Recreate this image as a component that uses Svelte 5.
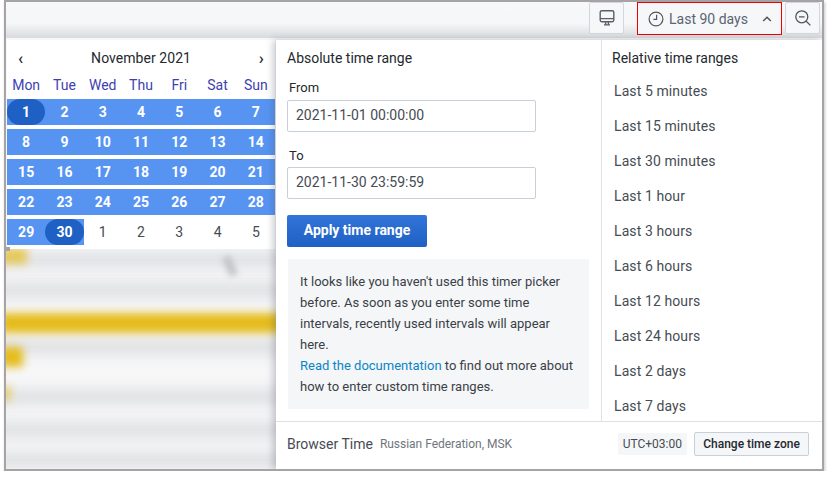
<script>
  const days = ['Mon', 'Tue', 'Wed', 'Thu', 'Fri', 'Sat', 'Sun'];
  const weeks = [];
  for (let w = 0; w < 5; w++) {
    const row = [];
    for (let d = 0; d < 7; d++) {
      const n = w * 7 + d + 1;
      row.push(n <= 30 ? { n, on: true, edge: n === 1 || n === 30 } : { n: n - 30, on: false, edge: false });
    }
    weeks.push(row);
  }
  const ranges = ['Last 5 minutes', 'Last 15 minutes', 'Last 30 minutes', 'Last 1 hour', 'Last 3 hours', 'Last 6 hours', 'Last 12 hours', 'Last 24 hours', 'Last 2 days', 'Last 7 days'];
</script>

<div class="frame">
  <header class="topbar">
    <button class="tool square" aria-label="Monitor">
      <svg width="18" height="18" viewBox="0 0 18 18" fill="none" stroke="#5b6068" stroke-width="1.4"><rect x="2.2" y="1.7" width="13.6" height="11" rx="1.6"/><path d="M2.2 9.6h13.6M6 15.9h6M7.6 12.7v3.2M10.4 12.7v3.2"/></svg>
    </button>
    <button class="tool range">
      <svg width="16" height="16" viewBox="0 0 16 16" fill="none" stroke="#50555c" stroke-width="1.2"><circle cx="8" cy="8" r="6.9"/><path d="M8.6 3.8V8.4H5.4"/></svg>
      <span>Last 90 days</span>
      <svg class="chev" width="10" height="6" viewBox="0 0 10 6" fill="none" stroke="#50555c" stroke-width="1.5"><path d="M1.2 5L5 1.3 8.8 5"/></svg>
    </button>
    <button class="tool square zoom" aria-label="Zoom out">
      <svg width="18" height="18" viewBox="0 0 18 18" fill="none" stroke="#50555c" stroke-width="1.3"><circle cx="7.8" cy="7.8" r="6"/><path d="M5 7.8h5.6M12.2 12.2l4.2 4.2"/></svg>
    </button>
  </header>

  <div class="body">
    <section class="left">
      <div class="blurred" aria-hidden="true">
        <i class="stripe s1"></i><i class="stripe s2"></i><i class="stripe s3"></i><i class="stripe s4"></i><i class="stripe s5"></i><i class="stripe s6"></i>
        <i class="y y1"></i><i class="y y2"></i><i class="y y3"></i><i class="y y4"></i><i class="smudge"></i>
      </div>
      <div class="calendar">
        <div class="cal-head">
          <span class="nav">‹</span>
          <span class="month">November 2021</span>
          <span class="nav">›</span>
        </div>
        <div class="weekdays">
          {#each days as d}<span>{d}</span>{/each}
        </div>
        {#each weeks as row}
          <div class="week">
            {#each row as c}
              <span class="day" class:on={c.on} class:edge={c.edge}>{c.n}</span>
            {/each}
          </div>
        {/each}
      </div>
      <i class="handle"></i>
    </section>

    <section class="panel">
      <div class="columns">
        <div class="absolute">
          <h2>Absolute time range</h2>
          <div class="label">From</div>
          <input value="2021-11-01 00:00:00" />
          <div class="label to">To</div>
          <input value="2021-11-30 23:59:59" />
          <button class="apply">Apply time range</button>
          <div class="note">
            It looks like you haven't used this timer picker before. As soon as you enter some time intervals, recently used intervals will appear here.<br />
            <span class="link">Read the documentation</span> to find out more about how to enter custom time ranges.
          </div>
        </div>
        <div class="relative">
          <h2>Relative time ranges</h2>
          <ul>
            {#each ranges as r}<li>{r}</li>{/each}
          </ul>
        </div>
      </div>
      <footer>
        <span class="bt">Browser Time</span>
        <span class="tz">Russian Federation, MSK</span>
        <span class="utc">UTC+03:00</span>
        <button class="change">Change time zone</button>
      </footer>
    </section>
  </div>
</div>

<style>
  :global(body) { margin: 0; background: #fff; font-family: Roboto, "Liberation Sans", sans-serif; }
  .frame {
    box-sizing: border-box; width: 820px; height: 471px; margin-left: 4px;
    border: 2px solid #a5a3a5;
    box-shadow: 1px 2px 3px rgba(0,0,0,.22);
    display: flex; flex-direction: column; overflow: hidden; background: #f4f5f5;
  }
  button { font-family: inherit; cursor: pointer; }
  .topbar {
    height: 36px; flex: none; display: flex; justify-content: flex-end; align-items: flex-start;
    background: linear-gradient(#f7f8f9 0, #f5f6f7 60%, #d8dade 100%);
  }
  .tool {
    box-sizing: border-box; height: 32px; background: #f6f7f8; border: 1px solid #d3d6da; border-radius: 2px;
    display: flex; align-items: center; justify-content: center; padding: 0;
  }
  .square { width: 35px; }
  .range {
    width: 145px; height: 33px; margin: 0 3px 0 13px; border: 1px solid #e00; border-radius: 0; gap: 5px;
    color: #5a6472; font-size: 14px; letter-spacing: 0; justify-content: flex-start; padding-left: 10px;
  }
  .chev { margin-left: 9px; }
  .zoom { margin-right: 2px; }

  .body { flex: 1; display: flex; min-height: 0; }
  .left { position: relative; width: 270px; flex: none; padding: 2px 1px 0 1px; box-sizing: border-box; }
  .calendar { position: relative; background: #fff; height: 209px; width: 268px; }
  .cal-head { display: flex; justify-content: space-between; align-items: center; height: 36px; padding: 0 11px; }
  .nav { font-size: 17px; color: #24292e; line-height: 1; font-weight: 500; }
  .month { font-size: 14px; color: #24292e; letter-spacing: .05px; }
  .weekdays { display: grid; grid-template-columns: repeat(7, 1fr); height: 23px; box-sizing: border-box; padding-bottom: 6px; align-items: center; text-align: center; font-size: 14px; color: #3d3fb0; }
  .week { display: grid; grid-template-columns: repeat(7, 1fr); height: 26px; margin-bottom: 4px; }
  .day { display: flex; align-items: center; justify-content: center; font-size: 14px; color: #464c54; }
  .day.on { background: #5794f2; color: #fff; font-weight: 700; }
  .day.edge { background: #5794f2; position: relative; z-index: 0; }
  .day.edge::before { content: ""; position: absolute; inset: 0; border-radius: 13px; background: #1f60c4; z-index: -1; }
  .handle { position: absolute; left: 0; top: 209px; width: 4px; height: 4px; background: #a5a3a5; }

  .blurred { position: absolute; inset: 0; background: #f7f7f8; overflow: hidden; }
  .stripe { position: absolute; left: -20px; width: 310px; height: 14px; background: #dcdee1; filter: blur(7px); }
  .s1 { top: 215px; } .s2 { top: 245px; } .s3 { top: 302px; }
  .s4 { top: 352px; } .s5 { top: 385px; } .s6 { top: 415px; }
  .y { position: absolute; left: -6px; background: #e5bc1c; filter: blur(4px); }
  .y1 { top: 210px; width: 27px; height: 16px; opacity: .7; }
  .y2 { top: 275px; width: 285px; height: 20px; }
  .y3 { top: 309px; width: 23px; height: 20px; }
  .y4 { top: 348px; width: 11px; height: 15px; opacity: .55; }
  .smudge { position: absolute; left: 220px; top: 218px; width: 8px; height: 20px; background: #bfc1c4; filter: blur(3px); transform: rotate(-25deg); }

  .panel { position: relative; flex: 1; background: #fff; margin-top: 2px; display: flex; flex-direction: column; box-shadow: -3px 0 7px rgba(60,70,90,.28); min-width: 0; }
  .columns { flex: 1; display: flex; min-height: 0; }
  .absolute { width: 326px; flex: none; box-sizing: border-box; padding: 9px 12px 0 11px; border-right: 1px solid #dde0e4; }
  h2 { margin: 0; font-size: 14px; font-weight: 400; color: #24292e; letter-spacing: 0; line-height: 18px; }
  .label { font-size: 13px; color: #24292e; margin: 12px 0 0 2px; line-height: 18px; padding-bottom: 3px; }
  .label.to { margin-top: 15px; padding-bottom: 2px; }
  input {
    display: block; box-sizing: border-box; width: 249px; height: 32px; border: 1px solid #c7d0d9; border-radius: 2px;
    padding: 0 8px 2px; font: 14px Roboto, sans-serif; letter-spacing: 0; color: #464c54; outline: none; background: #fff;
  }
  .apply {
    display: block; width: 140px; height: 32px; margin-top: 16px; padding: 0 0 2px; border: 0; border-radius: 2px; color: #fff;
    font-size: 14px; font-weight: 700; background: linear-gradient(#3274d9, #1f60c4);
  }
  .note {
    width: 301px; height: 150px; box-sizing: border-box; margin: 12px 0 0 1px; background: #f5f6f8; padding: 12px 12px;
    font-size: 13px; line-height: 21px; color: #3a3f46; letter-spacing: 0;
  }
  .link { color: #0a85c7; }
  .relative { flex: 1; padding: 9px 10px 0 10px; min-width: 0; }
  ul { list-style: none; margin: 7px 0 0 2px; padding: 0; }
  li { height: 35px; line-height: 35px; font-size: 14px; color: #464c54; letter-spacing: .1px; }
  footer { height: 48px; flex: none; box-sizing: border-box; border-top: 1px solid #dde0e4; display: flex; align-items: center; padding: 0 13px 3px 11px; }
  .bt { font-size: 14px; color: #464c54; letter-spacing: 0; }
  .tz { font-size: 12px; color: #6f757d; margin-left: 7px; letter-spacing: -.02px; }
  .utc { margin-left: auto; font-size: 12px; color: #464c54; background: #f5f6f8; height: 22px; line-height: 22px; padding: 0 5px; border-radius: 2px; }
  .change { margin-left: 7px; height: 24px; width: 115px; padding: 0; background: #f5f6f8; border: 1px solid #c7d0d9; border-radius: 2px; font-size: 12px; font-weight: 500; color: #24292e; }
</style>
